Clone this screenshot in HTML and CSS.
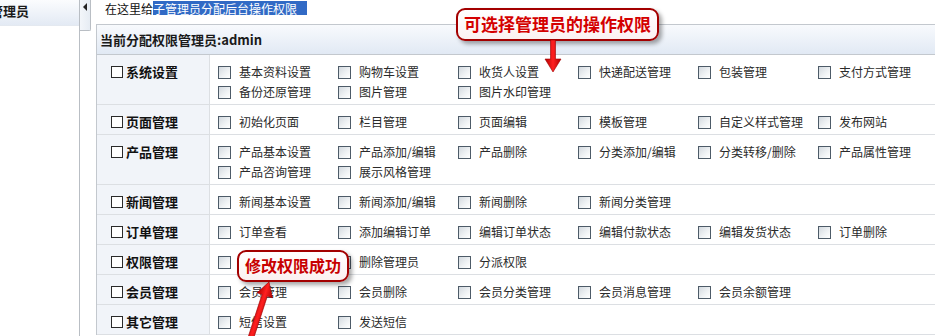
FILE: index.html
```html
<!DOCTYPE html>
<html lang="zh-CN">
<head>
<meta charset="utf-8">
<title>分配权限</title>
<link rel="stylesheet" href="styles.css">
</head>
<body>
<div class="page">
  <aside class="sidebar">
    <div class="side-head"><span class="side-title">管理员</span></div>
  </aside>
  <div class="toggle"><span class="tri"></span></div>
  <main class="main">
    <div class="intro"><span class="plain">在这里给</span><span class="sel">子管理员分配后台操作权限</span></div>
    <div class="table">
      <div class="thead">当前分配权限管理员:admin</div>

      <div class="row">
        <div class="label"><span class="cb-main"></span>系统设置</div>
        <div class="opts">
          <span class="opt"><span class="cb"></span>基本资料设置</span>
          <span class="opt"><span class="cb"></span>购物车设置</span>
          <span class="opt"><span class="cb"></span>收货人设置</span>
          <span class="opt"><span class="cb"></span>快递配送管理</span>
          <span class="opt"><span class="cb"></span>包装管理</span>
          <span class="opt"><span class="cb"></span>支付方式管理</span>
          <span class="opt"><span class="cb"></span>备份还原管理</span>
          <span class="opt"><span class="cb"></span>图片管理</span>
          <span class="opt"><span class="cb"></span>图片水印管理</span>
        </div>
      </div>

      <div class="row">
        <div class="label"><span class="cb-main"></span>页面管理</div>
        <div class="opts">
          <span class="opt"><span class="cb"></span>初始化页面</span>
          <span class="opt"><span class="cb"></span>栏目管理</span>
          <span class="opt"><span class="cb"></span>页面编辑</span>
          <span class="opt"><span class="cb"></span>模板管理</span>
          <span class="opt"><span class="cb"></span>自定义样式管理</span>
          <span class="opt"><span class="cb"></span>发布网站</span>
        </div>
      </div>

      <div class="row">
        <div class="label"><span class="cb-main"></span>产品管理</div>
        <div class="opts">
          <span class="opt"><span class="cb"></span>产品基本设置</span>
          <span class="opt"><span class="cb"></span>产品添加/编辑</span>
          <span class="opt"><span class="cb"></span>产品删除</span>
          <span class="opt"><span class="cb"></span>分类添加/编辑</span>
          <span class="opt"><span class="cb"></span>分类转移/删除</span>
          <span class="opt"><span class="cb"></span>产品属性管理</span>
          <span class="opt"><span class="cb"></span>产品咨询管理</span>
          <span class="opt"><span class="cb"></span>展示风格管理</span>
        </div>
      </div>

      <div class="row">
        <div class="label"><span class="cb-main"></span>新闻管理</div>
        <div class="opts">
          <span class="opt"><span class="cb"></span>新闻基本设置</span>
          <span class="opt"><span class="cb"></span>新闻添加/编辑</span>
          <span class="opt"><span class="cb"></span>新闻删除</span>
          <span class="opt"><span class="cb"></span>新闻分类管理</span>
        </div>
      </div>

      <div class="row">
        <div class="label"><span class="cb-main"></span>订单管理</div>
        <div class="opts">
          <span class="opt"><span class="cb"></span>订单查看</span>
          <span class="opt"><span class="cb"></span>添加编辑订单</span>
          <span class="opt"><span class="cb"></span>编辑订单状态</span>
          <span class="opt"><span class="cb"></span>编辑付款状态</span>
          <span class="opt"><span class="cb"></span>编辑发货状态</span>
          <span class="opt"><span class="cb"></span>订单删除</span>
        </div>
      </div>

      <div class="row">
        <div class="label"><span class="cb-main"></span>权限管理</div>
        <div class="opts">
          <span class="opt"><span class="cb"></span></span>
          <span class="opt"><span class="cb"></span>删除管理员</span>
          <span class="opt"><span class="cb"></span>分派权限</span>
        </div>
      </div>

      <div class="row">
        <div class="label"><span class="cb-main"></span>会员管理</div>
        <div class="opts">
          <span class="opt"><span class="cb"></span>会员管理</span>
          <span class="opt"><span class="cb"></span>会员删除</span>
          <span class="opt"><span class="cb"></span>会员分类管理</span>
          <span class="opt"><span class="cb"></span>会员消息管理</span>
          <span class="opt"><span class="cb"></span>会员余额管理</span>
        </div>
      </div>

      <div class="row">
        <div class="label"><span class="cb-main"></span>其它管理</div>
        <div class="opts">
          <span class="opt"><span class="cb"></span>短信设置</span>
          <span class="opt"><span class="cb"></span>发送短信</span>
        </div>
      </div>
    </div>
  </main>

  <div class="callout callout-top">可选择管理员的操作权限</div>
  <div class="callout callout-bottom">修改权限成功</div>

  <svg class="arrows" width="935" height="336" viewBox="0 0 935 336" xmlns="http://www.w3.org/2000/svg">
    <defs>
      <linearGradient id="ar" x1="0" y1="0" x2="1" y2="0">
        <stop offset="0" stop-color="#b00000"/>
        <stop offset="0.5" stop-color="#ff2020"/>
        <stop offset="1" stop-color="#b00000"/>
      </linearGradient>
    </defs>
    <g transform="translate(553,72)">
      <polygon points="0,0 -8,-13 -2.5,-13 -2.5,-32 2.5,-32 2.5,-13 8,-13" fill="url(#ar)" stroke="#a00000" stroke-width="0.6"/>
    </g>
    <g transform="translate(269,282) rotate(18)">
      <polygon points="0,0 8,14 2.8,14 2.8,66 -2.8,66 -2.8,14 -8,14" fill="url(#ar)" stroke="#a00000" stroke-width="0.6"/>
    </g>
  </svg>
</div>
</body>
</html>
```

FILE: styles.css
```css
* { box-sizing: border-box; }

html, body {
  margin: 0;
  padding: 0;
  background: #ffffff;
}

body {
  font-family: "Noto Sans CJK SC", "Liberation Sans", sans-serif;
  font-size: 12px;
  color: #222;
  width: 935px;
  height: 336px;
  overflow: hidden;
}

.page {
  position: relative;
  display: flex;
  width: 935px;
  height: 336px;
  overflow: hidden;
}

/* sidebar */
.sidebar {
  width: 80px;
  flex: none;
  border-right: 1px solid #b9bec4;
  background: #fff;
}

.side-head {
  height: 26px;
  background: linear-gradient(#fbfcfe, #e3eaf4);
  border-bottom: 1px solid #e4e9f0;
  overflow: hidden;
  white-space: nowrap;
}

.side-title {
  display: block;
  margin-left: -10px;
  font-size: 13px;
  font-weight: bold;
  line-height: 22px;
  color: #1a1a1a;
}

.toggle {
  width: 11px;
  height: 31px;
  flex: none;
  background: linear-gradient(90deg, #f3f6fa, #e6ecf3);
  border-right: 1px solid #b9bec4;
  border-bottom: 1px solid #b9bec4;
  border-bottom-right-radius: 2px;
  position: relative;
}

.tri {
  position: absolute;
  left: 3px;
  top: 3px;
  width: 0;
  height: 0;
  border-top: 4px solid transparent;
  border-bottom: 4px solid transparent;
  border-right: 4px solid #222;
}

/* main */
.main {
  flex: 1;
  min-width: 0;
  padding-left: 5px;
  overflow: hidden;
}

.intro {
  height: 24px;
  padding-left: 9px;
  padding-top: 1px;
  display: flex;
  align-items: flex-start;
  font-size: 12px;
  color: #111;
  white-space: nowrap;
}

.plain,
.sel {
  display: block;
  height: 14px;
  line-height: 15px;
}

.sel {
  background: #316ac5;
  color: #fff;
  padding-right: 10px;
}

.table {
  width: 900px;
  border-left: 1px solid #c3c8ce;
  border-top: 1px solid #c3c8ce;
}

.thead {
  height: 30px;
  padding-left: 3px;
  line-height: 29px;
  font-size: 13px;
  font-weight: bold;
  color: #1a1a1a;
  background: linear-gradient(#f8fafd, #e1e9f4);
  border-bottom: 1px solid #c3c8ce;
}

.row {
  display: flex;
  border-bottom: 1px solid #dcdfe3;
}

.label {
  width: 113px;
  flex: none;
  padding: 7px 0 2px 14px;
  line-height: 20px;
  font-size: 13px;
  font-weight: bold;
  color: #111;
  background: #f1f4f9;
  border-right: 1px solid #dcdfe3;
  display: flex;
  align-items: flex-start;
}

.cb-main {
  width: 12px;
  height: 12px;
  margin-top: 4px;
  margin-right: 3px;
  border: 1px solid #2a2a2a;
  background: #fff;
  flex: none;
}

.opts {
  flex: 1;
  padding: 7px 0 2px 8px;
  display: grid;
  grid-template-columns: repeat(6, 120px);
  grid-auto-rows: 20px;
}

.opt {
  display: flex;
  align-items: center;
  line-height: 20px;
  font-size: 12px;
  color: #2a2a2a;
  white-space: nowrap;
}

.cb {
  width: 13px;
  height: 13px;
  margin-right: 8px;
  flex: none;
  border: 1px solid #4d5b68;
  background: linear-gradient(135deg, #d3d9df 0%, #eef1f3 55%, #ffffff 100%);
}

/* callouts */
.callout {
  position: absolute;
  border: 2px solid #a30000;
  border-radius: 9px;
  background: linear-gradient(#ffffff, #fbf1f1);
  box-shadow: 3px 3px 4px rgba(0, 0, 0, 0.35);
  color: #d40000;
  font-weight: bold;
  text-align: center;
  white-space: nowrap;
}

.callout-top {
  left: 456px;
  top: 8px;
  width: 203px;
  height: 33px;
  font-size: 17px;
  line-height: 28px;
}

.callout-bottom {
  left: 237px;
  top: 250px;
  width: 112px;
  height: 32px;
  font-size: 16px;
  line-height: 27px;
  color: #c80000;
}

.arrows {
  position: absolute;
  left: 0;
  top: 0;
  pointer-events: none;
}
```
